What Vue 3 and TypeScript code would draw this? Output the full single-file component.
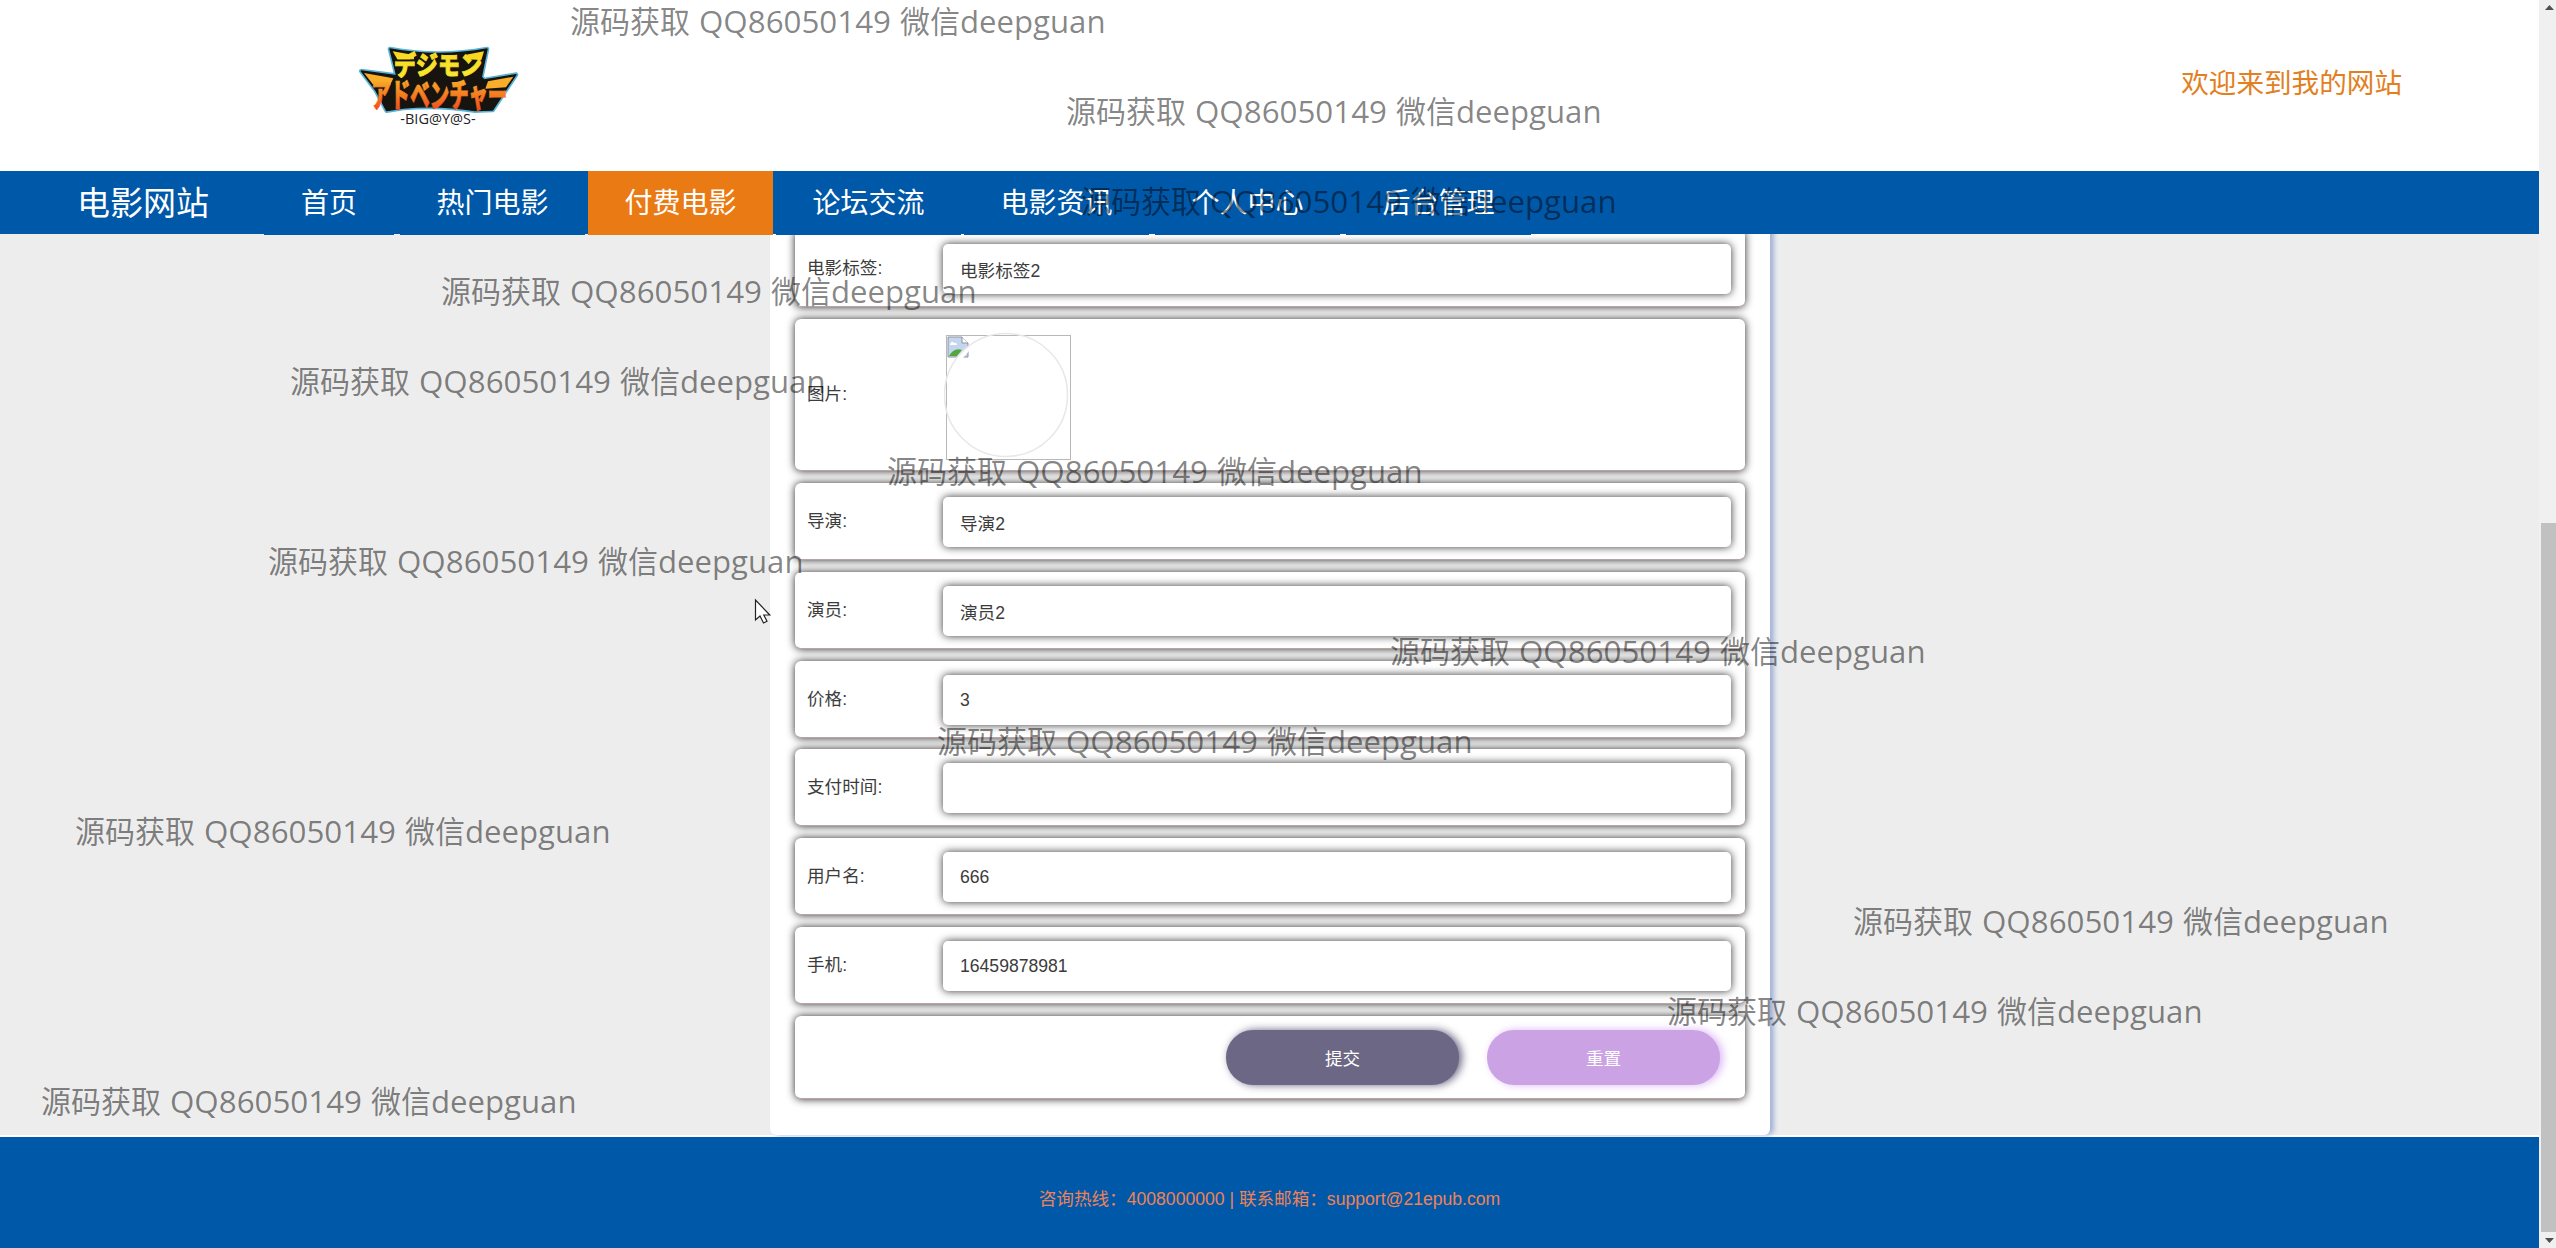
<script setup lang="ts">
interface NavItem {
  label: string
  active?: boolean
}

interface Field {
  label: string
  value?: string
  image?: boolean
}

const navItems: NavItem[] = [
  { label: '首页' },
  { label: '热门电影' },
  { label: '付费电影', active: true },
  { label: '论坛交流' },
  { label: '电影资讯' },
  { label: '个人中心' },
  { label: '后台管理' },
]

const fields: Field[] = [
  { label: '电影标签', value: '电影标签2' },
  { label: '图片', image: true },
  { label: '导演', value: '导演2' },
  { label: '演员', value: '演员2' },
  { label: '价格', value: '3' },
  { label: '支付时间', value: '' },
  { label: '用户名', value: '666' },
  { label: '手机', value: '16459878981' },
]

// left edge of each watermark line, top to bottom
const marks: number[] = [571, 1067, 1082, 442, 291, 888, 269, 1391, 938, 76, 1854, 1668, 42]
</script>

<template>
  <div class="page">
    <div class="site">
      <header class="header">
        <svg class="logo" viewBox="0 0 600 330" width="200" height="110">
          <defs>
            <linearGradient id="top" x1="0" y1="0" x2="0" y2="1">
              <stop offset="0" stop-color="#fbd51c" />
              <stop offset="1" stop-color="#f7ec35" />
            </linearGradient>
            <linearGradient id="low" gradientUnits="userSpaceOnUse" x1="0" y1="140" x2="0" y2="240">
              <stop offset="0" stop-color="#fab52a" />
              <stop offset="1" stop-color="#f04d1c" />
            </linearGradient>
          </defs>
          <g stroke-linejoin="round">
            <path d="M150 57 Q295 84 441 57 L424 141 L432 150 L528 134 L500 176 L458 240 L405 242 Q300 224 190 234 L140 242 L108 182 L64 123 L170 137 Z" fill="#58b4d6" stroke="#58b4d6" stroke-width="14" />
            <path d="M150 57 Q295 84 441 57 L424 141 L432 150 L528 134 L500 176 L458 240 L405 242 Q300 224 190 234 L140 242 L108 182 L64 123 L170 137 Z" fill="#17140f" stroke="#17140f" stroke-width="4" />
          </g>
          <g class="kana">
            <path d="M158 64 L222 75 L222 88 L172 88 Z M432 64 L378 74 L380 88 L424 90 Z" fill="#f9d51f" />
            <text x="162" y="136" textLength="264" lengthAdjust="spacingAndGlyphs" font-size="78" fill="url(#top)" stroke="#f8df28">デジモン</text>
            <path d="M72 129 L160 145 L150 166 L98 162 Z M520 140 L444 154 L436 176 L498 172 Z" fill="#f9ad2a" />
            <text x="94" y="232" textLength="408" lengthAdjust="spacingAndGlyphs" font-size="98" fill="url(#low)" stroke="url(#low)">アドベンチャー</text>
          </g>
          <text class="sub" x="181" y="281" textLength="226" lengthAdjust="spacingAndGlyphs">-BIG@Y@S-</text>
        </svg>
        <span class="welcome">欢迎来到我的网站</span>
      </header>

      <nav class="nav">
        <span class="brand">电影网站</span>
        <a v-for="item in navItems" :key="item.label" class="nav-item" :class="{ active: item.active }">{{ item.label }}</a>
      </nav>

      <main class="main">
        <form class="panel">
          <div v-for="field in fields" :key="field.label" class="row" :class="{ tall: field.image }">
            <label class="label">{{ field.label }}:</label>
            <div v-if="field.image" class="picture">
              <svg width="127" height="129" viewBox="0 0 127 129" fill="none">
                <rect x="2.5" y="3.5" width="124" height="124" stroke="#b8b8b8" />
                <path d="M4 5h14l6 6v14H4z" fill="#c4d5ef" stroke="#8e949c" />
                <path d="M18 5v6h6" fill="#fff" stroke="#8e949c" />
                <path d="M6 12q2-4 4-1q3-1 3 2H6z" fill="#fff" />
                <path d="M5 24q5-9 13-6l-5 6z" fill="#55a63f" />
                <path d="M12 26L25 14v5l-6 7z" fill="#fff" />
                <circle cx="62" cy="63" r="61.5" stroke="#e8e8e8" stroke-width="1.6" />
              </svg>
            </div>
            <input v-else class="input" type="text" :value="field.value" />
          </div>
          <div class="row actions">
            <button type="button" class="btn submit">提交</button>
            <button type="button" class="btn reset">重置</button>
          </div>
        </form>
      </main>

      <footer class="footer">咨询热线：4008000000 | 联系邮箱：support@21epub.com</footer>
    </div>

    <div class="scrollbar">
      <svg width="17" height="16" viewBox="0 0 17 16"><path d="M6 10l4.5-5 4.5 5z" fill="#505050" /></svg>
      <div class="thumb"></div>
      <svg width="17" height="16" viewBox="0 0 17 16"><path d="M6 6l4.5 5 4.5-5z" fill="#505050" /></svg>
    </div>

    <svg class="overlay" width="2556" height="1248" viewBox="0 0 2556 1248">
      <g v-for="(x, i) in marks" :key="i" class="mark" :transform="`translate(${x} ${32.6 + i * 90})`">
        <text x="-1" y="0" textLength="120" lengthAdjust="spacingAndGlyphs">源码获取</text>
        <text x="128" y="0" textLength="192" lengthAdjust="spacingAndGlyphs">QQ86050149</text>
        <text x="329" y="0" textLength="60" lengthAdjust="spacingAndGlyphs">微信</text>
        <text x="389" y="0" textLength="145.5" lengthAdjust="spacingAndGlyphs">deepguan</text>
      </g>
      <path d="M755.5 600v20l4.5-4 3.5 7 3.5-1.8-3.2-6.2h6z" fill="#fff" stroke="#222" stroke-width="1.2" />
    </svg>
  </div>
</template>

<style>
body {
  overflow: hidden;
}
</style>

<style scoped>
.page {
  position: relative;
  display: flex;
  width: 2556px;
  height: 1248px;
  overflow: hidden;
  background: #ededed;
  color: #3c3c3c;
  font-family: "Liberation Sans", "Noto Sans CJK SC", sans-serif;
  font-size: 17.6px;
}
.site {
  display: flex;
  flex-direction: column;
  width: 2539px;
}
.header {
  display: flex;
  justify-content: space-between;
  flex: none;
  height: 171px;
  box-sizing: border-box;
  padding: 30px 137px 0 340px;
  background: #fff;
}
.kana {
  font-family: "Noto Sans CJK JP", sans-serif;
  font-weight: 900;
  stroke-width: 2.5;
}
.sub {
  font-family: "Open Sans", sans-serif;
  font-size: 44px;
  font-weight: 500;
  fill: #222;
}
.welcome {
  height: 107px;
  color: #e2801f;
  font-size: 27.6px;
  line-height: 108px;
}
.nav {
  position: relative;
  z-index: 1;
  display: flex;
  flex: none;
  height: 63px;
  background: #0058a9;
  color: #fff;
}
.brand {
  width: 187px;
  padding-left: 77px;
  font-size: 33px;
  line-height: 65px;
}
.nav-item {
  width: 185px;
  height: 64px;
  margin-right: 3px;
  background: #0058a9;
  font-size: 28px;
  line-height: 65px;
  text-align: center;
}
.nav-item:nth-child(2) {
  width: 130px;
  margin-right: 6px;
}
.nav-item:nth-child(n + 6) {
  margin-right: 6px;
}
.nav-item.active {
  background: #ea7a14;
}
.main {
  flex: none;
  height: 903px;
  overflow: hidden;
  background: linear-gradient(#ededed, #ededed) 0 0 / 100% 901px no-repeat #fff;
}
.panel {
  display: flex;
  flex-direction: column;
  gap: 11.9px;
  box-sizing: border-box;
  width: 1000px;
  height: 905px;
  margin: -4px 0 0 770px;
  padding: 0 25px;
  border-radius: 0 0 6px 6px;
  background: #fff;
  box-shadow: 4px 0 5px #a3b3d6;
}
.row {
  display: flex;
  flex: none;
  box-sizing: border-box;
  height: 77px;
  padding: 14px 14px 0 13px;
  border-bottom: 1px solid #b9a3a5;
  border-radius: 6px;
  background: #fff;
  box-shadow: 0 0 9px rgba(0, 0, 0, 0.85);
}
.row.tall {
  height: 152px;
}
.label {
  flex: none;
  width: 135px;
  margin-left: -1px;
  margin-right: 1px;
  line-height: 48px;
}
.tall .label {
  line-height: 123px;
}
.input {
  flex: 1;
  box-sizing: border-box;
  height: 50px;
  padding: 1px 17px 0;
  border: 0;
  border-radius: 5px;
  background: #fff;
  box-shadow: 0 0 8px rgba(0, 0, 0, 0.8);
  color: #3c3c3c;
  font: inherit;
}
.picture {
  margin: -1px 0 0 1px;
}
.actions {
  justify-content: flex-end;
  gap: 28px;
  height: 83px;
  padding-right: 25px;
}
.btn {
  width: 233px;
  height: 55px;
  border: 0;
  border-radius: 27px;
  color: #fff;
  font: inherit;
}
.submit {
  background: #6c6784;
  box-shadow: 3px 0 8px #6c6784;
}
.reset {
  background: #cba3e4;
  box-shadow: 3px 0 8px #dcb8f4;
}
.footer {
  flex: 1;
  padding-top: 3px;
  background: #0058a9;
  color: #ee8255;
  line-height: 118px;
  text-align: center;
}
.scrollbar {
  display: flex;
  flex-direction: column;
  width: 17px;
  background: #f0f0f0;
}
.thumb {
  height: 713px;
  margin: 507px 0 0 2px;
  background: #c1c1c1;
}
.overlay {
  position: absolute;
  z-index: 2;
  inset: 0;
  pointer-events: none;
}
.mark {
  fill: #000;
  fill-opacity: 0.49;
  font-family: "Open Sans", "Noto Sans CJK SC", sans-serif;
  font-size: 30.5px;
}
</style>
